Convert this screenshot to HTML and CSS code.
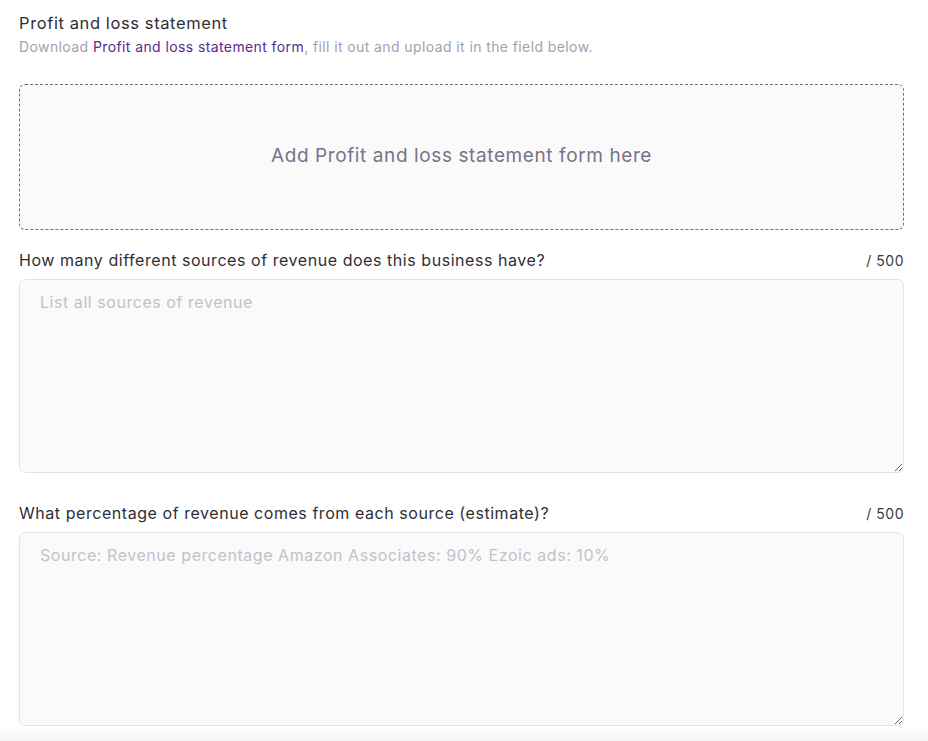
FILE: index.html
```html
<!DOCTYPE html>
<html lang="en">
<head>
<meta charset="utf-8">
<title>Profit and loss statement</title>
<link rel="stylesheet" href="styles.css">
</head>
<body>
<main class="form">
  <section class="field">
    <h2 class="title">Profit and loss statement</h2>
    <p class="hint">Download <a class="link" href="#">Profit and loss statement form</a>, fill it out and upload it in the field below.</p>
    <div class="dropzone">Add Profit and loss statement form here</div>
  </section>
  <section class="field">
    <div class="label-row">
      <label class="label" for="q1">How many different sources of revenue does this business have?</label>
      <span class="count">/ 500</span>
    </div>
    <textarea id="q1" class="textarea" placeholder="List all sources of revenue"></textarea>
  </section>
  <section class="field">
    <div class="label-row">
      <label class="label" for="q2">What percentage of revenue comes from each source (estimate)?</label>
      <span class="count">/ 500</span>
    </div>
    <textarea id="q2" class="textarea" placeholder="Source: Revenue percentage Amazon Associates: 90% Ezoic ads: 10%"></textarea>
  </section>
</main>
<div class="fade"></div>
</body>
</html>
```
FILE: styles.css
```css
html, body {
  margin: 0;
  padding: 0;
  background: #ffffff;
}
body {
  font-family: Inter, "Noto Sans", "Liberation Sans", sans-serif;
  color: #2f2e36;
  height: 741px;
  overflow: hidden;
  position: relative;
}
.form {
  padding: 13px 24px 0 19px;
  display: flex;
  flex-direction: column;
}
.field {
  display: flex;
  flex-direction: column;
}
.title {
  margin: 0;
  font-size: 16.5px;
  letter-spacing: 0.6px;
  font-weight: 400;
  line-height: 20px;
  color: #2f2e36;
}
.hint {
  margin: 5px 0 0;
  font-size: 14px;
  letter-spacing: 0.4px;
  line-height: 18px;
  color: #a3a1ad;
}
.link {
  color: #5a2a8c;
  text-decoration: none;
}
.dropzone {
  margin-top: 28px;
  box-sizing: border-box;
  height: 146px;
  padding-bottom: 4px;
  border: 1px dashed #716e82;
  border-radius: 6px;
  background: #fafafa;
  display: flex;
  align-items: center;
  justify-content: center;
  font-size: 19px;
  letter-spacing: 0.6px;
  color: #77738a;
}
.field + .field {
  margin-top: 20px;
}
.field:nth-child(3) {
  margin-top: 30px;
}
.label-row {
  display: flex;
  justify-content: space-between;
  align-items: baseline;
}
.label {
  font-size: 16px;
  letter-spacing: 0.55px;
  line-height: 20px;
  color: #2f2e36;
}
.count {
  font-size: 14px;
  letter-spacing: 0.5px;
  color: #3a3942;
}
.textarea {
  margin-top: 9px;
  box-sizing: border-box;
  width: 100%;
  height: 194px;
  border: 1px solid #e4e3ea;
  border-radius: 6px;
  background: #fafafa;
  padding: 12px 20px;
  font-family: Inter, "Noto Sans", "Liberation Sans", sans-serif;
  font-size: 16px;
  letter-spacing: 0.55px;
  line-height: 20px;
  color: #2f2e36;
  resize: vertical;
  outline: none;
}
.textarea::placeholder {
  color: #c3c1ca;
}
.fade {
  position: absolute;
  left: 0;
  right: 0;
  bottom: 0;
  height: 14px;
  background: linear-gradient(#ffffff, #f3f3f3);
  pointer-events: none;
}
```
